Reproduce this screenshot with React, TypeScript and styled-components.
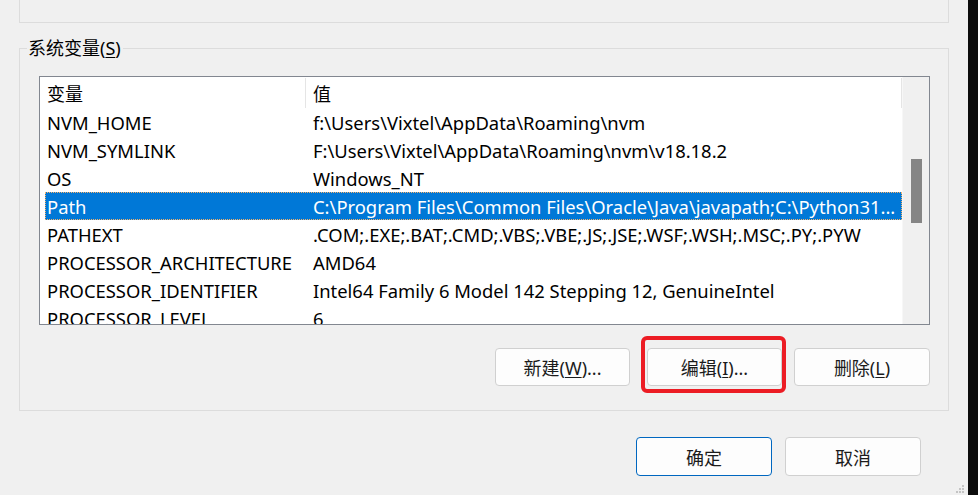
import styled, { createGlobalStyle } from 'styled-components';

const GlobalStyle = createGlobalStyle`
  html, body {
    margin: 0;
    padding: 0;
    background: #f0f0f0;
  }
  body {
    font-family: "Noto Sans", "Noto Sans CJK SC", sans-serif;
    font-size: 18px;
    color: #000;
    overflow: hidden;
  }
`;

const Window = styled.div`
  display: flex;
  width: 978px;
  height: 495px;
  overflow: hidden;
`;

const Main = styled.div`
  position: relative;
  flex: 0 0 968px;
  display: flex;
  flex-direction: column;
`;

const EdgeBar = styled.div`
  flex: 1;
  background: #0c0c0c;
`;

const UserGroupStub = styled.div`
  box-sizing: border-box;
  margin-left: 19px;
  width: 930px;
  height: 23px;
  border: 1px solid #dcdcdc;
  border-top: none;
`;

const Group = styled.div`
  box-sizing: border-box;
  display: flex;
  flex-direction: column;
  margin: 25px 0 0 19px;
  width: 930px;
  height: 363px;
  border: 1px solid #dcdcdc;
`;

const Legend = styled.div`
  align-self: flex-start;
  margin: -13px 0 0 7px;
  padding: 0 2px 0 1px;
  height: 24px;
  line-height: 24px;
  background: #f0f0f0;
  font-size: 18px;
`;

const Key = styled.u`
  text-underline-offset: 2px;
`;

const ListBox = styled.div`
  box-sizing: border-box;
  display: flex;
  margin: 16px 0 0 19px;
  width: 891px;
  height: 249px;
  border: 1px solid #828790;
  background: #fff;
  font-size: 18.4px;
`;

const ListBody = styled.div`
  flex: 1;
  display: flex;
  flex-direction: column;
  overflow: hidden;
`;

const HeaderRow = styled.div`
  display: flex;
  height: 31px;
  flex: 0 0 31px;
  align-items: center;
  font-family: "Noto Sans CJK SC", sans-serif;
  font-size: 18px;
`;

const HeaderCell = styled.div<{ $w?: number }>`
  box-sizing: border-box;
  display: flex;
  align-items: center;
  height: 30px;
  padding-left: 7px;
  ${(p) => (p.$w ? `flex: 0 0 ${p.$w}px;` : 'flex: 1;')}
  border-right: 1px solid #e5e5e5;
`;

const Row = styled.div<{ $selected?: boolean }>`
  box-sizing: border-box;
  display: flex;
  align-items: center;
  flex: 0 0 28px;
  height: 28px;
  margin-left: 5px;
  white-space: nowrap;
  background: ${(p) => (p.$selected ? '#0078d7' : 'transparent')};
  color: ${(p) => (p.$selected ? '#fff' : '#000')};
  outline: ${(p) => (p.$selected ? '1px dotted #f7b26a' : 'none')};
  outline-offset: -1px;
`;

const NameCell = styled.div`
  flex: 0 0 261px;
  padding-left: 2px;
  box-sizing: border-box;
  overflow: hidden;
`;

const ValueCell = styled.div`
  flex: 1;
  padding-left: 7px;
  overflow: hidden;
`;

const ScrollTrack = styled.div`
  display: flex;
  flex-direction: column;
  align-items: center;
  flex: 0 0 26px;
  background: #f0f0f0;
  border-left: 1px solid #f7f7f7;
`;

const ScrollThumb = styled.div`
  margin-top: 82px;
  width: 11px;
  height: 64px;
  background: #858585;
`;

const ButtonRow = styled.div<{ $gap: number }>`
  display: flex;
  justify-content: flex-end;
  align-items: center;
  gap: ${(p) => p.$gap}px;
`;

const GroupButtons = styled(ButtonRow)`
  margin: 23px 18px 0 0;
`;

const DialogButtons = styled(ButtonRow)`
  margin: 26px 47px 0 0;
`;

const Button = styled.button<{ $w: number; $h: number; $default?: boolean }>`
  box-sizing: border-box;
  width: ${(p) => p.$w}px;
  height: ${(p) => p.$h}px;
  padding: 0;
  border: 1px solid ${(p) => (p.$default ? '#0067c0' : '#d0d0d0')};
  border-radius: 4px;
  background: #fdfdfd;
  color: #1b1b1b;
  font-family: "Noto Sans", "Noto Sans CJK SC", sans-serif;
  font-size: 18px;
`;

// red annotation frame round the edit button, cancelled out of the flow by negative margins
const Highlight = styled.div`
  display: flex;
  margin: -12px -5px -7px -2px;
  padding: 8px 0 3px 2px;
  border: 4px solid #ec1c24;
  border-radius: 6px;
`;

const Grip = styled.svg`
  position: absolute;
  right: 3px;
  bottom: 0;
`;

const rows: [string, string][] = [
  ['NVM_HOME', 'f:\\Users\\Vixtel\\AppData\\Roaming\\nvm'],
  ['NVM_SYMLINK', 'F:\\Users\\Vixtel\\AppData\\Roaming\\nvm\\v18.18.2'],
  ['OS', 'Windows_NT'],
  ['Path', 'C:\\Program Files\\Common Files\\Oracle\\Java\\javapath;C:\\Python31...'],
  ['PATHEXT', '.COM;.EXE;.BAT;.CMD;.VBS;.VBE;.JS;.JSE;.WSF;.WSH;.MSC;.PY;.PYW'],
  ['PROCESSOR_ARCHITECTURE', 'AMD64'],
  ['PROCESSOR_IDENTIFIER', 'Intel64 Family 6 Model 142 Stepping 12, GenuineIntel'],
  ['PROCESSOR_LEVEL', '6'],
];

export default function App() {
  return (
    <>
      <GlobalStyle />
      <Window>
        <Main>
          <UserGroupStub />
          <Group>
            <Legend>
              系统变量(<Key>S</Key>)
            </Legend>
            <ListBox>
              <ListBody>
                <HeaderRow>
                  <HeaderCell $w={266}>变量</HeaderCell>
                  <HeaderCell>值</HeaderCell>
                </HeaderRow>
                {rows.map(([name, value]) => (
                  <Row key={name} $selected={name === 'Path'}>
                    <NameCell>{name}</NameCell>
                    <ValueCell>{value}</ValueCell>
                  </Row>
                ))}
              </ListBody>
              <ScrollTrack>
                <ScrollThumb />
              </ScrollTrack>
            </ListBox>
            <GroupButtons $gap={13}>
              <Button $w={135} $h={38}>
                新建(<Key>W</Key>)...
              </Button>
              <Highlight>
                <Button $w={135} $h={38}>
                  编辑(<Key>I</Key>)...
                </Button>
              </Highlight>
              <Button $w={136} $h={38}>
                删除(<Key>L</Key>)
              </Button>
            </GroupButtons>
          </Group>
          <DialogButtons $gap={13}>
            <Button $w={136} $h={39} $default>
              确定
            </Button>
            <Button $w={136} $h={39}>
              取消
            </Button>
          </DialogButtons>
          <Grip width="11" height="10" viewBox="0 0 11 10">
            <g fill="#c4c4c4">
              <rect x="8" y="0" width="2" height="2" />
              <rect x="5" y="3" width="2" height="2" />
              <rect x="8" y="3" width="2" height="2" />
              <rect x="2" y="6" width="2" height="2" />
              <rect x="5" y="6" width="2" height="2" />
              <rect x="8" y="6" width="2" height="2" />
            </g>
          </Grip>
        </Main>
        <EdgeBar />
      </Window>
    </>
  );
}
